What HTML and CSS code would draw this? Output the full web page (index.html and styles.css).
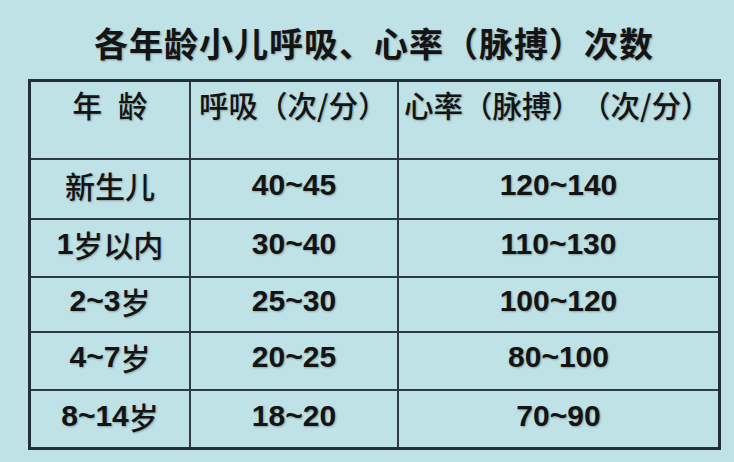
FILE: index.html
```html
<!DOCTYPE html>
<html lang="zh-CN">
<head>
<meta charset="utf-8">
<title>各年龄小儿呼吸、心率（脉搏）次数</title>
<link rel="stylesheet" href="styles.css">
</head>
<body>
<h1 class="title">各年龄小儿呼吸、心率（脉搏）次数</h1>
<div class="table">
  <div class="cell head c1 center"><span class="sp">年</span>龄</div>
  <div class="cell head c2">呼吸（次/分）</div>
  <div class="cell head c3">心率（脉搏）（次/分）</div>

  <div class="cell r1 c1"><span class="cjk">新生儿</span></div>
  <div class="cell r1 c2">40~45</div>
  <div class="cell r1 c3">120~140</div>

  <div class="cell r2 c1">1<span class="cjk">岁以内</span></div>
  <div class="cell r2 c2">30~40</div>
  <div class="cell r2 c3">110~130</div>

  <div class="cell r3 c1">2~3<span class="cjk">岁</span></div>
  <div class="cell r3 c2">25~30</div>
  <div class="cell r3 c3">100~120</div>

  <div class="cell r4 c1">4~7<span class="cjk">岁</span></div>
  <div class="cell r4 c2">20~25</div>
  <div class="cell r4 c3">80~100</div>

  <div class="cell r5 c1 last">8~14<span class="cjk">岁</span></div>
  <div class="cell r5 c2 last">18~20</div>
  <div class="cell r5 c3 last">70~90</div>
</div>
</body>
</html>
```

FILE: styles.css
```css
html, body {
  margin: 0;
  padding: 0;
}
body {
  width: 734px;
  height: 462px;
  overflow: hidden;
  background: #bee2e6;
  color: #141414;
  font-family: "Liberation Sans", "Noto Sans CJK SC", sans-serif;
  text-spacing-trim: space-all;
}
.title {
  margin: 23px 0 0 0;
  padding-left: 14px;
  height: 40px;
  line-height: 40px;
  font-family: "Noto Sans CJK SC", sans-serif;
  font-size: 34px;
  font-weight: bold;
  text-align: center;
  letter-spacing: 1px;
  text-spacing-trim: space-all;
  text-shadow: 1px 1px 2px rgba(0, 0, 0, 0.3);
}
.table {
  box-sizing: border-box;
  margin: 16px 0 0 28px;
  width: 693px;
  border: 3px solid #22303a;
  display: grid;
  grid-template-columns: 160px 208px 1fr;
  grid-template-rows: 78px 60px 58px 55px 58px 56px;
}
.cell {
  box-sizing: border-box;
  border-bottom: 2px solid #2c3c44;
  display: flex;
  align-items: center;
  justify-content: center;
  padding-bottom: 8px;
  font-size: 30px;
  font-weight: bold;
  text-shadow: 1px 1px 2px rgba(0, 0, 0, 0.28);
}
.cell.last {
  border-bottom: none;
  padding-bottom: 6px;
}
.c1, .c2 {
  border-right: 2px solid #2c3c44;
}
.head {
  align-items: flex-start;
  justify-content: flex-start;
  padding: 3px 0 0 0;
  line-height: 38px;
  font-family: "Noto Sans CJK SC", sans-serif;
  font-size: 29.5px;
  font-weight: 500;
  text-spacing-trim: space-all;
}
.head.center {
  justify-content: center;
}
.head.c2 {
  padding-left: 8px;
}
.head.c3 {
  padding-left: 5px;
}
.sp {
  margin-right: 16px;
}
.cjk {
  font-family: "Noto Sans CJK SC", sans-serif;
  font-weight: 500;
}
```
